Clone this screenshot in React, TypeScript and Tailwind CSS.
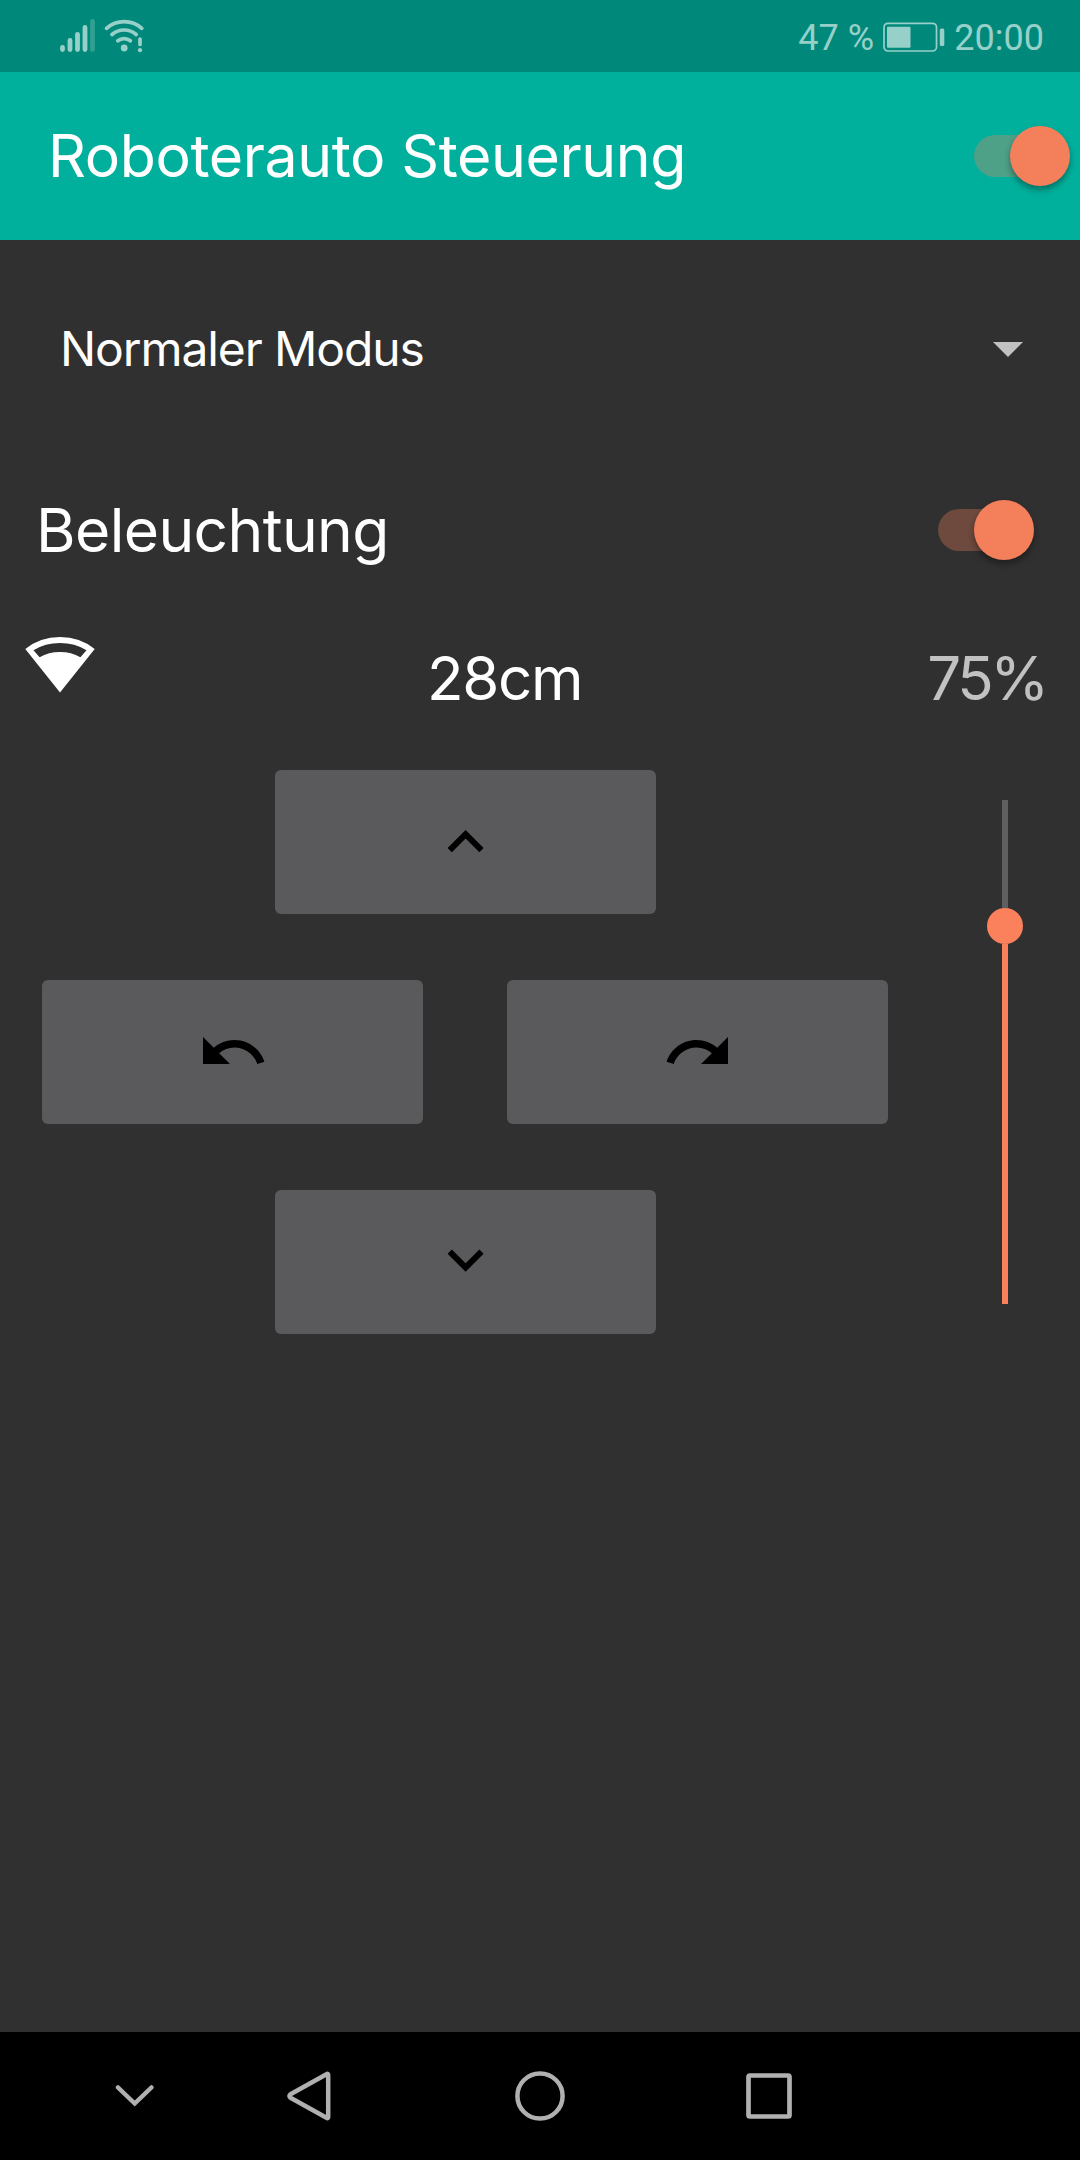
import type { ReactNode } from "react";

function Switch({ className = "" }: { className?: string }) {
  return (
    <div className={`relative h-[60px] w-24 shrink-0 ${className}`}>
      <div className="absolute left-0 top-[9px] h-[42px] w-[90px] rounded-full bg-[#f47f5b]/32" />
      <div className="absolute right-[0.5px] top-0 size-[60px] rounded-full bg-[#f47f5b] shadow-[0_4px_6px_rgba(0,0,0,0.36)]" />
    </div>
  );
}

function PadButton({ label, children }: { label: string; children: ReactNode }) {
  return (
    <button
      aria-label={label}
      className="flex h-36 w-[381px] items-center justify-center rounded-md bg-[#5a5a5c]"
    >
      <svg viewBox="0 0 24 24" className="size-[72px] fill-black">
        {children}
      </svg>
    </button>
  );
}

function StatusBar() {
  return (
    <header className="flex h-[72px] items-start justify-between bg-[#00897a] pl-[60px] pr-9 text-[#97d0c9]">
      <svg viewBox="0 0 90 72" className="h-[72px] w-[90px]">
        <g stroke="currentColor" strokeWidth="4.8" strokeLinecap="round">
          <path d="M2.5 47.5v2M10 40.5v9M17.5 34.300v15.200M25 27.500v22" />
          <path d="M32.500 21.500v28" stroke="#2fa092" />
        </g>
        <g fill="none" stroke="currentColor" strokeWidth="3.700" strokeLinecap="round">
          <path d="M46.500 28.300a26.500 26.500 0 0 1 35.300 0M52 34.500a18.500 18.500 0 0 1 24.200 0M57.800 40.800a10 10 0 0 1 12.600 0M80 39v5.500" />
        </g>
        <circle cx="64.200" cy="48" r="3.400" fill="currentColor" />
        <circle cx="80" cy="50.200" r="2.100" fill="currentColor" />
      </svg>
      <div className="flex h-[72px] items-center font-['Roboto',sans-serif] text-[36px]">
        <span className="mt-1 w-[85px] whitespace-nowrap">47 %</span>
        <svg viewBox="0 0 62 30" className="mt-px h-[30px] w-[62px]">
          <rect x="1" y="1.300" width="52.500" height="27.700" rx="4" fill="none" stroke="currentColor" strokeWidth="1.700" />
          <rect x="4" y="4.800" width="23.500" height="21" rx="1" fill="currentColor" />
          <rect x="56.800" y="6.500" width="4.500" height="17.500" rx="1.500" fill="currentColor" />
        </svg>
        <span className="ml-[9px] mt-1 whitespace-nowrap">20:00</span>
      </div>
    </header>
  );
}

function NavBar() {
  return (
    <nav className="flex h-32 items-center bg-black pl-[115px]">
      <svg viewBox="0 0 40 52" className="h-[52px] w-10" fill="none" stroke="#b0b0b0" strokeWidth="4.500" strokeLinecap="round">
        <path d="M3 17.500l16.700 16 16.700-16" />
      </svg>
      <svg viewBox="0 0 46 52" className="ml-[131px] h-[52px] w-[46px]" fill="none" stroke="#b0b0b0" strokeWidth="4.500" strokeLinejoin="round">
        <path d="M40.500 4.200q1.700-1 1.700 1v41.600q0 2-1.700 1L4.500 27.800q-2.200-1.800 0-3.600z" />
      </svg>
      <svg viewBox="0 0 52 52" className="ml-[182px] h-[52px] w-[52px]" fill="none" stroke="#b0b0b0" strokeWidth="4.500">
        <circle cx="26" cy="26" r="22.600" />
      </svg>
      <svg viewBox="0 0 52 52" className="ml-[177px] h-[52px] w-[52px]" fill="none" stroke="#b0b0b0" strokeWidth="4.700">
        <rect x="5.500" y="5.500" width="41" height="41" rx="1.500" />
      </svg>
    </nav>
  );
}

export default function App() {
  return (
    <div className="flex h-[2160px] w-[1080px] flex-col overflow-hidden bg-[#303030] font-['Inter',sans-serif] text-white">
      <StatusBar />
      <div className="flex h-[168px] items-center justify-between bg-[#00b09c] pl-12 pr-2.5">
        <h1 className="mb-0.5 whitespace-nowrap text-[59px] leading-none tracking-[-0.4px]">Roboterauto Steuerung</h1>
        <Switch className="mb-px" />
      </div>
      <main className="flex flex-1 flex-col">
        <div className="mt-[73px] flex h-[72px] items-center justify-between pl-[60px] pr-[57px]">
          <span className="mb-px whitespace-nowrap text-[48px] leading-none tracking-[-1.1px]">Normaler Modus</span>
          <svg viewBox="0 0 30 15" className="h-[15px] w-[30px] fill-[#c1c1c1]">
            <path d="M0 0h30L15 15z" />
          </svg>
        </div>
        <div className="mt-[109px] flex h-[72px] items-center justify-between pl-9 pr-[46px]">
          <span className="whitespace-nowrap text-[60.5px] leading-none tracking-[-0.6px]">Beleuchtung</span>
          <Switch />
        </div>
        <div className="mt-[70px] grid h-[84px] grid-cols-[405px_200px_1fr] items-start text-[60px] leading-[84px]">
          <svg viewBox="0 0 120 84" className="h-[84px] w-[120px]">
            <path
              fill="white"
              fillRule="evenodd"
              d="M25.300 13Q40 1 60 1t34.700 12L60 56.500zM33.500 14.300l6.100 7Q48.500 16 60 16t20.400 5.300l6.100-7Q75 7 60 7t-26.500 7.300z"
            />
          </svg>
          <span className="pl-[22px] tracking-[-1.3px]">28cm</span>
          <span className="justify-self-end pr-[34px] tracking-[-3.3px] text-[#c1c1c1]">75%</span>
        </div>
        <div className="mt-[50px] flex justify-between pl-[42px] pr-[57px]">
          <div className="flex w-[846px] flex-col items-center gap-[66px]">
            <PadButton label="Vorwärts">
              <path transform="translate(0.2 0)" d="M7.410 15.410L12 10.830l4.590 4.580L18 14l-6-6-6 6z" />
            </PadButton>
            <div className="flex w-full justify-between">
              <PadButton label="Links">
                <path d="M12.500 8c-2.650 0-5.050.990-6.900 2.600L2 7v9h9l-3.620-3.620c1.390-1.160 3.160-1.880 5.120-1.880 3.540 0 6.550 2.310 7.600 5.500l2.370-.780C21.080 11.030 17.150 8 12.500 8z" />
              </PadButton>
              <PadButton label="Rechts">
                <path d="M18.400 10.600C16.550 8.990 14.150 8 11.500 8c-4.650 0-8.580 3.030-9.960 7.220L3.900 16c1.050-3.190 4.050-5.500 7.600-5.500 1.950 0 3.730.720 5.120 1.880L13 16h9V7l-3.600 3.600z" />
              </PadButton>
            </div>
            <PadButton label="Rückwärts">
              <path transform="translate(0.2 0)" d="M7.410 7.840L12 12.420l4.590-4.580L18 9.250l-6 6-6-6z" />
            </PadButton>
          </div>
          <div className="mt-[30px] flex h-[504px] w-9 flex-col items-center">
            <div className="h-[108px] w-1.5 bg-[#5f5f5f]" />
            <div className="size-9 rounded-full bg-[#fa815c]" />
            <div className="w-1.5 flex-1 bg-[#fa815c]" />
          </div>
        </div>
      </main>
      <NavBar />
    </div>
  );
}
